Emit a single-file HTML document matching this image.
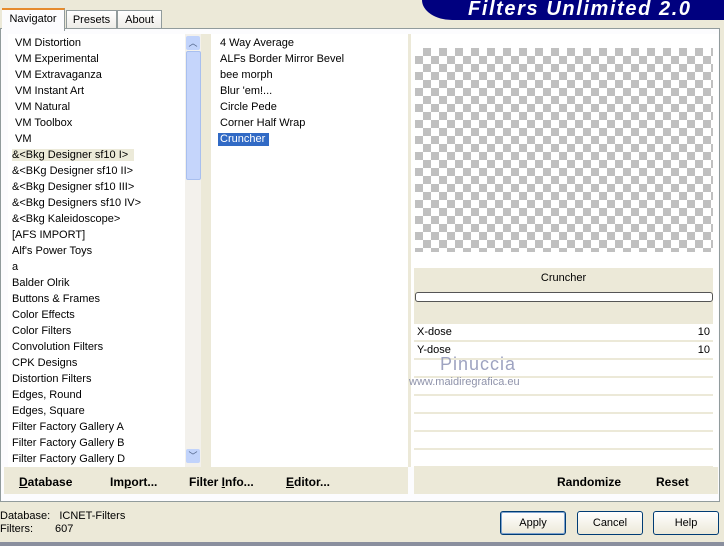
<!DOCTYPE html><html><head><style>
body{margin:0;width:724px;height:546px;background:#ece9d8;font-family:"Liberation Sans",sans-serif;font-size:11px;position:relative;overflow:hidden;color:#000}
.a{position:absolute}
.list div{height:16px;line-height:16px;white-space:nowrap}
.btn{position:absolute;border:1px solid #003c74;border-radius:3px;background:linear-gradient(#fff,#ece9d8);text-align:center;line-height:22px;font-size:11px}
.row{position:absolute;left:414px;width:299px;height:16px;background:#fff;line-height:16px}
.bb{font-weight:bold;font-size:12px;position:absolute;top:475px}
</style></head><body>
<div class="a" style="left:422px;top:0;width:302px;height:20px;background:#00007f;border-bottom-left-radius:30px 20px"></div>
<div class="a" style="left:468px;top:-2px;color:#fff;font-weight:bold;font-style:italic;font-size:20px;letter-spacing:1.6px">Filters Unlimited 2.0</div>
<!-- tabs -->
<div class="a" style="left:66px;top:10px;width:49px;height:18px;border:1px solid #919b9c;border-bottom:none;background:linear-gradient(#fff,#ecebe6);text-align:center;line-height:18px">Presets</div>
<div class="a" style="left:117px;top:10px;width:43px;height:18px;border:1px solid #919b9c;border-bottom:none;background:linear-gradient(#fff,#ecebe6);text-align:center;line-height:18px">About</div>
<div class="a" style="left:0;top:28px;width:718px;height:472px;border:1px solid #919b9c;background:#fcfcfe"></div>
<div class="a" style="left:2px;top:8px;width:62px;height:21px;background:#fcfcfe;border-top:2px solid #e68b2c;border-right:1px solid #919b9c;text-align:center;line-height:19px">Navigator</div>
<!-- left list -->
<div class="a" style="left:8px;top:34px;width:177px;height:433px;background:#fff"></div>
<div class="a list" style="left:12px;top:35px;width:172px;height:432px;overflow:hidden">
<div style="padding-left:3px">VM Distortion</div><div style="padding-left:3px">VM Experimental</div><div style="padding-left:3px">VM Extravaganza</div><div style="padding-left:3px">VM Instant Art</div><div style="padding-left:3px">VM Natural</div><div style="padding-left:3px">VM Toolbox</div><div style="padding-left:3px">VM</div>
<div><span style="background:#ecead9;padding:0 6px 0 0">&amp;&lt;Bkg Designer sf10 I&gt;</span></div><div>&amp;&lt;BKg Designer sf10 II&gt;</div><div>&amp;&lt;Bkg Designer sf10 III&gt;</div><div>&amp;&lt;Bkg Designers sf10 IV&gt;</div><div>&amp;&lt;Bkg Kaleidoscope&gt;</div><div>[AFS IMPORT]</div><div>Alf's Power Toys</div><div>a</div><div>Balder Olrik</div><div>Buttons &amp; Frames</div><div>Color Effects</div><div>Color Filters</div><div>Convolution Filters</div><div>CPK Designs</div><div>Distortion Filters</div><div>Edges, Round</div><div>Edges, Square</div><div>Filter Factory Gallery A</div><div>Filter Factory Gallery B</div><div>Filter Factory Gallery D</div></div>
<!-- scrollbar -->
<div class="a" style="left:185px;top:34px;width:16px;height:433px;background:#f3f1ec"></div>
<div class="a" style="left:186px;top:36px;width:14px;height:14px;background:#c1d3fb;border-radius:2px;color:#4d6185;font-size:9px;text-align:center;line-height:14px">︿</div>
<div class="a" style="left:186px;top:51px;width:13px;height:127px;background:#c5d5fb;border:1px solid #a8bfef;border-radius:2px"></div>
<div class="a" style="left:186px;top:449px;width:14px;height:14px;background:#c1d3fb;border-radius:2px;color:#4d6185;font-size:9px;text-align:center;line-height:14px">﹀</div>
<!-- middle list -->
<div class="a" style="left:201px;top:34px;width:10px;height:433px;background:#ece9d8"></div>
<div class="a" style="left:211px;top:34px;width:197px;height:433px;background:#fff"></div>
<div class="a list" style="left:220px;top:35px">
<div>4 Way Average</div><div>ALFs Border Mirror Bevel</div><div>bee morph</div><div>Blur 'em!...</div><div>Circle Pede</div><div>Corner Half Wrap</div><div><span style="background:#316ac5;color:#fff;padding:0 4px 1px 2px;margin-left:-2px">Cruncher</span></div></div>
<div class="a" style="left:408px;top:34px;width:3px;height:433px;background:#ece9d8"></div>
<!-- right -->
<div class="a" style="left:411px;top:34px;width:307px;height:433px;background:#fff"></div>
<div class="a" style="left:415px;top:48px;width:298px;height:204px;background-color:#fff;background-image:linear-gradient(45deg,#c0c0c0 25%,transparent 25%,transparent 75%,#c0c0c0 75%),linear-gradient(45deg,#c0c0c0 25%,transparent 25%,transparent 75%,#c0c0c0 75%);background-size:16px 16px;background-position:0 0,8px 8px"></div>
<div class="a" style="left:414px;top:268px;width:299px;height:54px;background:#ece9d8"></div>
<div class="a" style="left:414px;top:272px;width:299px;text-align:center">Cruncher</div>
<div class="a" style="left:415px;top:292px;width:296px;height:8px;border:1px solid #555;border-radius:3px;background:#fff"></div>
<div class="a" style="left:414px;top:322px;width:299px;height:145px;background:#ece9d8"></div>
<div class="row" style="top:324px">&nbsp;X-dose<span style="float:right;padding-right:3px">10</span></div>
<div class="row" style="top:342px">&nbsp;Y-dose<span style="float:right;padding-right:3px">10</span></div>
<div class="row" style="top:360px"></div><div class="row" style="top:378px"></div><div class="row" style="top:396px"></div><div class="row" style="top:414px"></div><div class="row" style="top:432px"></div><div class="row" style="top:450px"></div>
<div class="a" style="left:440px;top:354px;color:#9ea3c1;font-size:18px;letter-spacing:1px">Pinuccia</div>
<div class="a" style="left:409px;top:376px;color:#8f93aa;font-size:11px">www.maidiregrafica.eu</div>
<!-- bottom bar -->
<div class="a" style="left:4px;top:467px;width:292px;height:27px;background:#ece9d8"></div>
<div class="a" style="left:296px;top:467px;width:112px;height:27px;background:#ece9d8"></div>
<div class="a" style="left:414px;top:467px;width:304px;height:27px;background:#ece9d8"></div>
<div class="bb" style="left:19px"><u>D</u>atabase</div>
<div class="bb" style="left:110px">Im<u>p</u>ort...</div>
<div class="bb" style="left:189px">Filter <u>I</u>nfo...</div>
<div class="bb" style="left:286px"><u>E</u>ditor...</div>
<div class="bb" style="left:557px">Randomize</div>
<div class="bb" style="left:656px">Reset</div>
<!-- status -->
<div class="a" style="left:0;top:510px;line-height:13px">Database:&nbsp;&nbsp; ICNET-Filters<br>Filters:<span style="padding-left:22px">607</span></div>
<div class="btn" style="left:500px;top:511px;width:64px;height:22px;box-shadow:inset 0 0 0 1px #7da2ce">Apply</div>
<div class="btn" style="left:577px;top:511px;width:64px;height:22px">Cancel</div>
<div class="btn" style="left:653px;top:511px;width:64px;height:22px">Help</div>
<div class="a" style="left:0;top:542px;width:724px;height:4px;background:#8a8f9e"></div>
</body></html>
